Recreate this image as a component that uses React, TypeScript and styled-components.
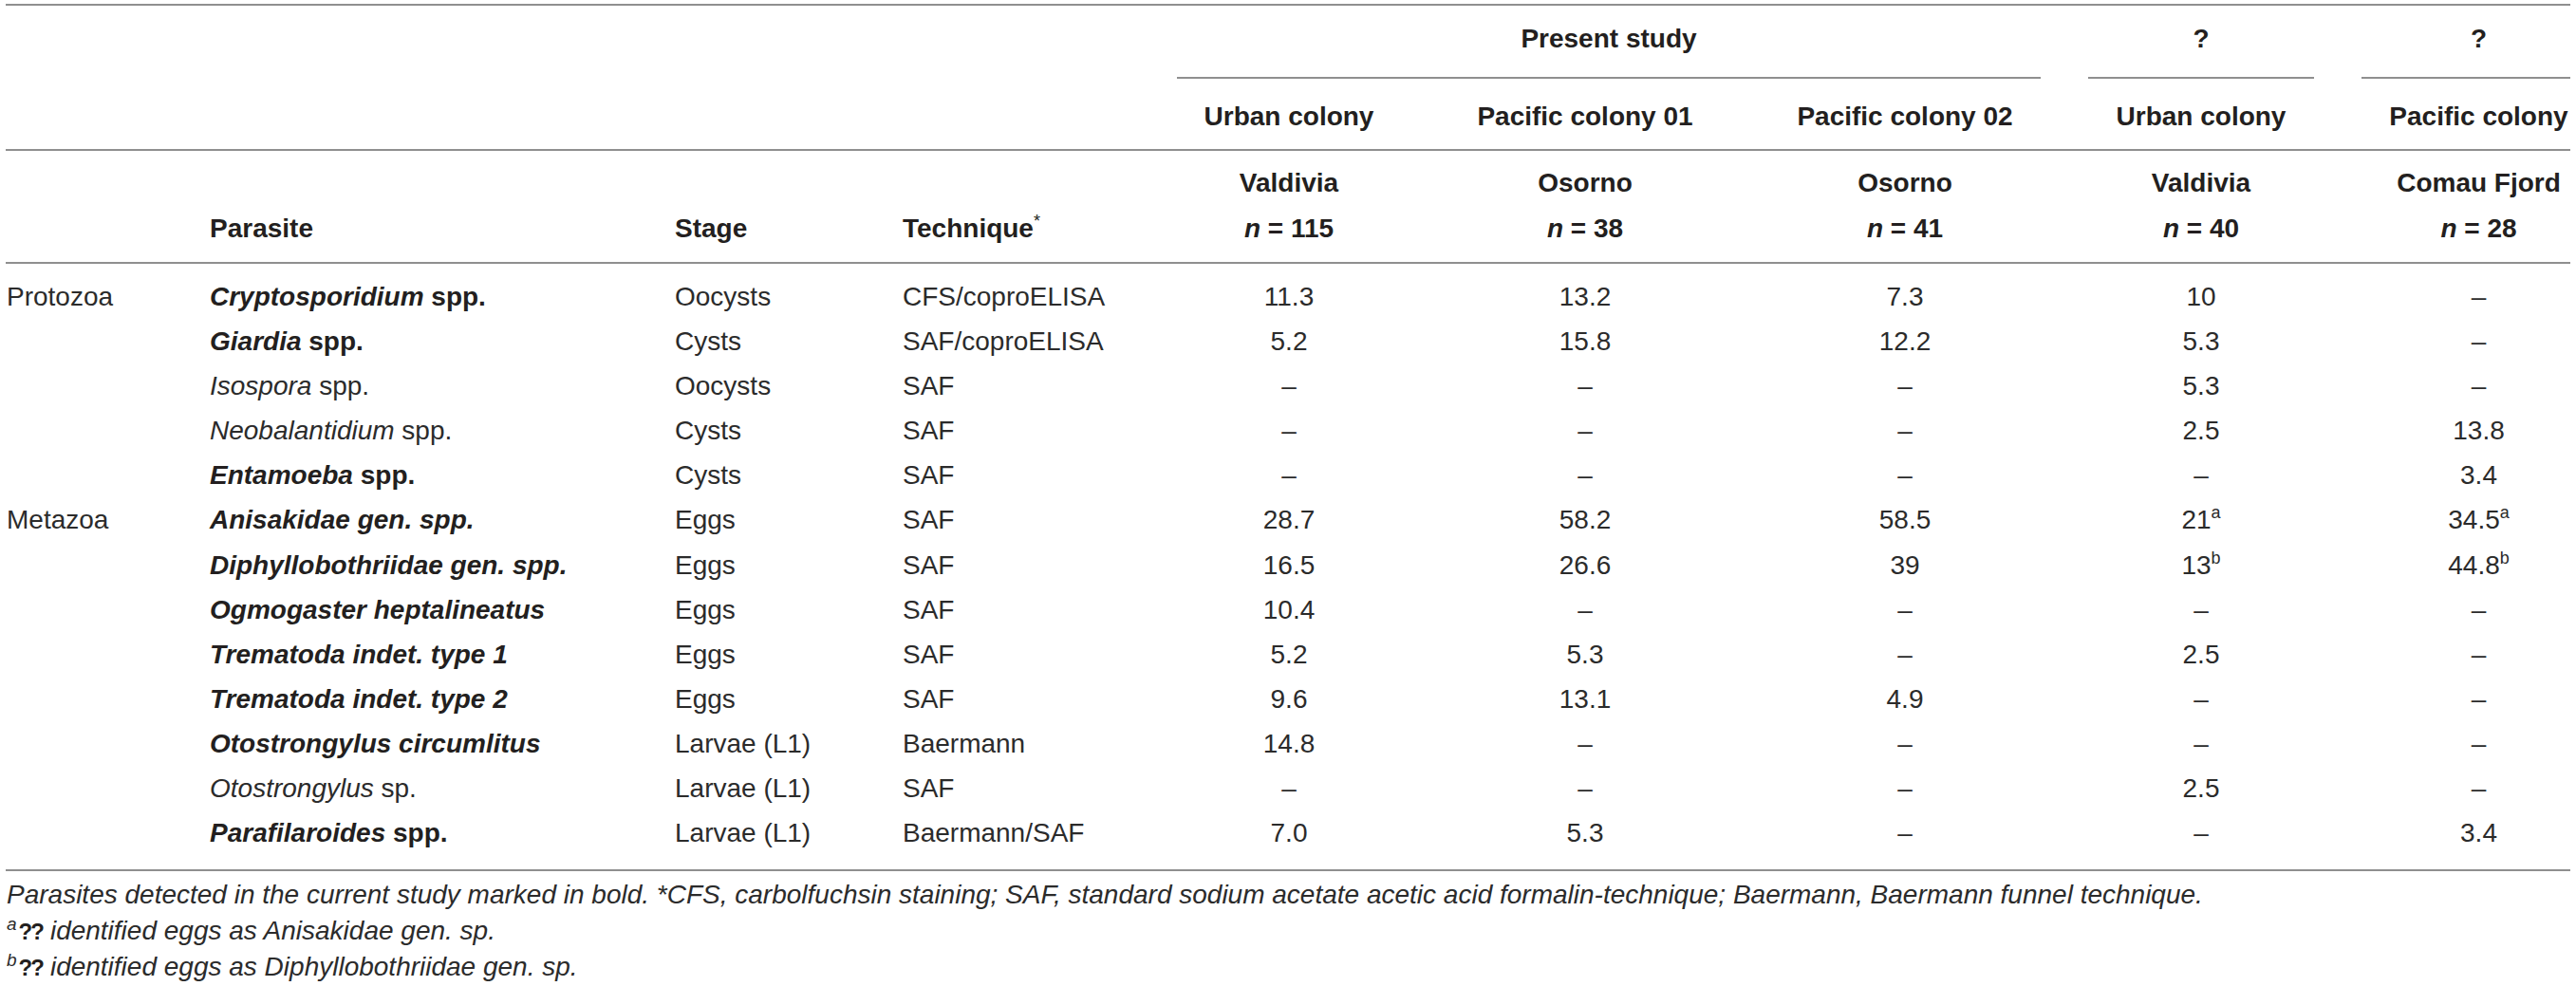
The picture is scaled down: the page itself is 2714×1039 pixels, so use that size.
import React from "react";
import styled, { createGlobalStyle } from "styled-components";

const GlobalStyle = createGlobalStyle`
  html, body { margin: 0; padding: 0; background: #ffffff; }
  body {
    font-family: "Liberation Sans", Arial, Helvetica, sans-serif;
    color: #2b2b2b;
  }
`;

const COLS = "215px 490px 240px 264px 286px 338px 336px 288px 245px";

const Page = styled.div`
  width: 2714px;
  box-sizing: border-box;
  padding: 4px 6px 0;
`;

const Grid = styled.div`
  display: grid;
  grid-template-columns: ${COLS};
  font-size: 28px;
`;

const Rule = styled.div<{ $span?: string; $ml?: number; $mr?: number; $hidden?: boolean }>`
  grid-column: ${(p) => p.$span ?? "1 / -1"};
  height: 2px;
  background: ${(p) => (p.$hidden ? "transparent" : "#8f8f8f")};
  margin-left: ${(p) => p.$ml ?? 0}px;
  margin-right: ${(p) => p.$mr ?? 0}px;
`;

const TopRule = styled.div`
  height: 2px;
  background: #8f8f8f;
`;

const HeadCell = styled.div<{
  $span?: string;
  $pt: number;
  $pb: number;
  $lh?: number;
  $center?: boolean;
  $last?: boolean;
  $end?: boolean;
}>`
  grid-column: ${(p) => p.$span ?? "auto"};
  padding-top: ${(p) => p.$pt}px;
  padding-bottom: ${(p) => p.$pb}px;
  padding-left: ${(p) => (p.$last ? 52 : 0)}px;
  line-height: ${(p) => p.$lh ?? 42}px;
  font-weight: 700;
  color: #231f20;
  text-align: ${(p) => (p.$center ? "center" : "left")};
  white-space: nowrap;
  align-self: ${(p) => (p.$end ? "end" : "stretch")};
`;

const Italic = styled.em`
  font-style: italic;
`;

const HeadSup = styled.sup`
  font-size: 18px;
  font-weight: 400;
  line-height: 0;
  vertical-align: 11px;
`;

const Body = styled.div`
  padding: 11px 0 15px;
`;

const Row = styled.div`
  display: grid;
  grid-template-columns: ${COLS};
  font-size: 28px;
  line-height: 47.1px;
`;

const Cell = styled.div<{ $indent?: number; $bold?: boolean }>`
  padding-left: ${(p) => p.$indent ?? 0}px;
  font-weight: ${(p) => (p.$bold ? 700 : 400)};
  color: ${(p) => (p.$bold ? "#231f20" : "#2b2b2b")};
  white-space: nowrap;
`;

const Value = styled.div<{ $last?: boolean }>`
  text-align: center;
  padding-left: ${(p) => (p.$last ? 52 : 0)}px;
  white-space: nowrap;
`;

const Sup = styled.sup`
  font-size: 18px;
  line-height: 0;
  vertical-align: 11px;
`;

const Notes = styled.div`
  padding: 6px 0 0 1px;
  font-size: 28px;
  line-height: 37.5px;
  font-style: italic;
`;

const Note = styled.div`
  white-space: nowrap;
`;

const NoteSup = styled.sup`
  font-size: 19px;
  line-height: 0;
  vertical-align: 10px;
  margin-right: 2px;
`;

const Missing = styled.span`
  font-style: normal;
  font-weight: 700;
  font-size: 24px;
  letter-spacing: -2px;
  margin-right: 8px;
  color: #231f20;
`;

type RowData = {
  cat?: string;
  name: React.ReactNode;
  bold: boolean;
  stage: string;
  tech: string;
  vals: React.ReactNode[];
};

const D = "–";

const rows: RowData[] = [
  {
    cat: "Protozoa",
    name: (
      <>
        <Italic>Cryptosporidium</Italic> spp.
      </>
    ),
    bold: true,
    stage: "Oocysts",
    tech: "CFS/coproELISA",
    vals: ["11.3", "13.2", "7.3", "10", D],
  },
  {
    name: (
      <>
        <Italic>Giardia</Italic> spp.
      </>
    ),
    bold: true,
    stage: "Cysts",
    tech: "SAF/coproELISA",
    vals: ["5.2", "15.8", "12.2", "5.3", D],
  },
  {
    name: (
      <>
        <Italic>Isospora</Italic> spp.
      </>
    ),
    bold: false,
    stage: "Oocysts",
    tech: "SAF",
    vals: [D, D, D, "5.3", D],
  },
  {
    name: (
      <>
        <Italic>Neobalantidium</Italic> spp.
      </>
    ),
    bold: false,
    stage: "Cysts",
    tech: "SAF",
    vals: [D, D, D, "2.5", "13.8"],
  },
  {
    name: (
      <>
        <Italic>Entamoeba</Italic> spp.
      </>
    ),
    bold: true,
    stage: "Cysts",
    tech: "SAF",
    vals: [D, D, D, D, "3.4"],
  },
  {
    cat: "Metazoa",
    name: <Italic>Anisakidae gen. spp.</Italic>,
    bold: true,
    stage: "Eggs",
    tech: "SAF",
    vals: [
      "28.7",
      "58.2",
      "58.5",
      <>
        21<Sup>a</Sup>
      </>,
      <>
        34.5<Sup>a</Sup>
      </>,
    ],
  },
  {
    name: <Italic>Diphyllobothriidae gen. spp.</Italic>,
    bold: true,
    stage: "Eggs",
    tech: "SAF",
    vals: [
      "16.5",
      "26.6",
      "39",
      <>
        13<Sup>b</Sup>
      </>,
      <>
        44.8<Sup>b</Sup>
      </>,
    ],
  },
  {
    name: <Italic>Ogmogaster heptalineatus</Italic>,
    bold: true,
    stage: "Eggs",
    tech: "SAF",
    vals: ["10.4", D, D, D, D],
  },
  {
    name: <Italic>Trematoda indet. type 1</Italic>,
    bold: true,
    stage: "Eggs",
    tech: "SAF",
    vals: ["5.2", "5.3", D, "2.5", D],
  },
  {
    name: <Italic>Trematoda indet. type 2</Italic>,
    bold: true,
    stage: "Eggs",
    tech: "SAF",
    vals: ["9.6", "13.1", "4.9", D, D],
  },
  {
    name: <Italic>Otostrongylus circumlitus</Italic>,
    bold: true,
    stage: "Larvae (L1)",
    tech: "Baermann",
    vals: ["14.8", D, D, D, D],
  },
  {
    name: (
      <>
        <Italic>Otostrongylus</Italic> sp.
      </>
    ),
    bold: false,
    stage: "Larvae (L1)",
    tech: "SAF",
    vals: [D, D, D, "2.5", D],
  },
  {
    name: (
      <>
        <Italic>Parafilaroides</Italic> spp.
      </>
    ),
    bold: true,
    stage: "Larvae (L1)",
    tech: "Baermann/SAF",
    vals: ["7.0", "5.3", D, D, "3.4"],
  },
];

const colonies = [
  "Urban colony",
  "Pacific colony 01",
  "Pacific colony 02",
  "Urban colony",
  "Pacific colony",
];

const places: [string, string][] = [
  ["Valdivia", "115"],
  ["Osorno", "38"],
  ["Osorno", "41"],
  ["Valdivia", "40"],
  ["Comau Fjord", "28"],
];

export default function App() {
  return (
    <>
      <GlobalStyle />
      <Page>
        <TopRule />
        <Grid>
          <HeadCell $span="1 / 5" $pt={14} $pb={19} />
          <HeadCell $span="5 / 8" $pt={14} $pb={19} $center>
            Present study
          </HeadCell>
          <HeadCell $pt={14} $pb={19} $center>
            ?
          </HeadCell>
          <HeadCell $pt={14} $pb={19} $center $last>
            ?
          </HeadCell>

          <Rule $span="1 / 5" $hidden />
          <Rule $span="5 / 8" $ml={25} $mr={25} />
          <Rule $span="8 / 9" $ml={25} $mr={25} />
          <Rule $span="9 / 10" $ml={25} />

          <HeadCell $span="1 / 5" $pt={19} $pb={13} />
          {colonies.map((c, i) => (
            <HeadCell key={i} $pt={19} $pb={13} $center $last={i === 4}>
              {c}
            </HeadCell>
          ))}

          <Rule />

          <HeadCell $pt={10} $pb={11} $lh={48} $end />
          <HeadCell $pt={10} $pb={11} $lh={48} $end>
            Parasite
          </HeadCell>
          <HeadCell $pt={10} $pb={11} $lh={48} $end>
            Stage
          </HeadCell>
          <HeadCell $pt={10} $pb={11} $lh={48} $end>
            Technique<HeadSup>*</HeadSup>
          </HeadCell>
          {places.map(([p, n], i) => (
            <HeadCell key={i} $pt={10} $pb={11} $lh={48} $center $last={i === 4}>
              {p}
              <br />
              <Italic>n</Italic> = {n}
            </HeadCell>
          ))}

          <Rule />
        </Grid>

        <Body>
          {rows.map((r, i) => (
            <Row key={i}>
              <Cell $indent={1}>{r.cat ?? ""}</Cell>
              <Cell $bold={r.bold}>{r.name}</Cell>
              <Cell>{r.stage}</Cell>
              <Cell>{r.tech}</Cell>
              {r.vals.map((v, j) => (
                <Value key={j} $last={j === 4}>
                  {v}
                </Value>
              ))}
            </Row>
          ))}
        </Body>
        <TopRule />

        <Notes>
          <Note>
            Parasites detected in the current study marked in bold. *CFS, carbolfuchsin staining; SAF, standard
            sodium acetate acetic acid formalin-technique; Baermann, Baermann funnel technique.
          </Note>
          <Note>
            <NoteSup>a</NoteSup>
            <Missing>??</Missing>identified eggs as Anisakidae gen. sp.
          </Note>
          <Note>
            <NoteSup>b</NoteSup>
            <Missing>??</Missing>identified eggs as Diphyllobothriidae gen. sp.
          </Note>
        </Notes>
      </Page>
    </>
  );
}
